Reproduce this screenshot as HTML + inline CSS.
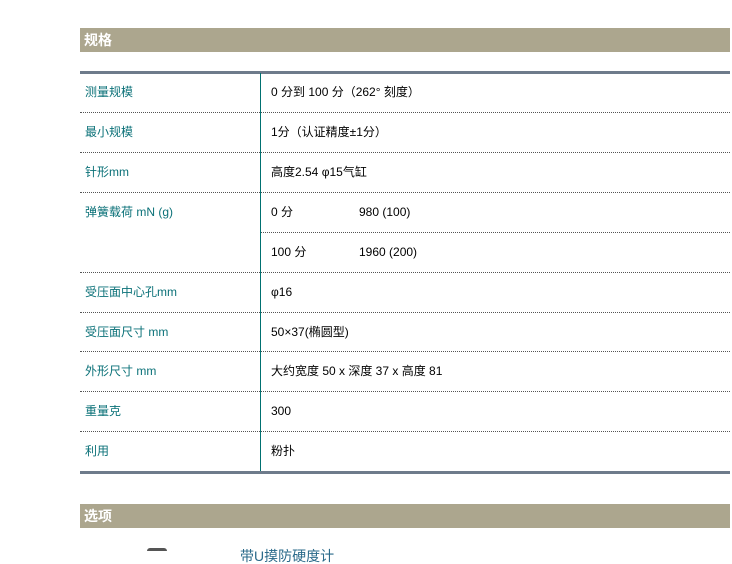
<!DOCTYPE html>
<html><head><meta charset="utf-8"><style>
body{margin:0;width:732px;height:550px;overflow:hidden;background:#fff;position:relative;font-family:"Liberation Sans","Noto Sans CJK SC","WenQuanYi Zen Hei",sans-serif;font-size:12px;}
.bar{position:absolute;left:80px;width:650px;height:24px;background:#aca68e;color:#fff;font-weight:bold;font-size:14px;line-height:24px;padding-left:4px;box-sizing:border-box;}
.thick{position:absolute;left:80px;width:650px;height:3px;background:#6e7b8b;}
.dot{position:absolute;height:0;border-top:1px dotted #555;}
.vl{position:absolute;left:260px;width:1px;background:#007070;}
.l{position:absolute;left:85px;color:#0b7178;line-height:14px;}
.v{position:absolute;color:#000;line-height:14px;}
</style></head><body>
<div class="bar" style="top:28px">规格</div>
<div class="thick" style="top:71px"></div>
<div class="vl" style="top:73px;height:398px"></div>
<div class="dot" style="left:80px;width:650px;top:112px"></div>
<div class="dot" style="left:80px;width:650px;top:152px"></div>
<div class="dot" style="left:80px;width:650px;top:192px"></div>
<div class="dot" style="left:261px;width:469px;top:232px"></div>
<div class="dot" style="left:80px;width:650px;top:272px"></div>
<div class="dot" style="left:80px;width:650px;top:312px"></div>
<div class="dot" style="left:80px;width:650px;top:351px"></div>
<div class="dot" style="left:80px;width:650px;top:391px"></div>
<div class="dot" style="left:80px;width:650px;top:431px"></div>
<div class="thick" style="top:471px"></div>

<div class="l" style="top:85px">测量规模</div><div class="v" style="left:271px;top:85px">0 分到 100 分（262° 刻度）</div>
<div class="l" style="top:125px">最小规模</div><div class="v" style="left:271px;top:125px">1分（认证精度±1分）</div>
<div class="l" style="top:165px">针形mm</div><div class="v" style="left:271px;top:165px">高度2.54 φ15气缸</div>
<div class="l" style="top:205px">弹簧载荷 mN (g)</div>
<div class="v" style="left:271px;top:205px">0 分</div><div class="v" style="left:359px;top:205px">980 (100)</div>
<div class="v" style="left:271px;top:245px">100 分</div><div class="v" style="left:359px;top:245px">1960 (200)</div>
<div class="l" style="top:285px">受压面中心孔mm</div><div class="v" style="left:271px;top:285px">φ16</div>
<div class="l" style="top:325px">受压面尺寸 mm</div><div class="v" style="left:271px;top:325px">50×37(椭圆型)</div>
<div class="l" style="top:364px">外形尺寸 mm</div><div class="v" style="left:271px;top:364px">大约宽度 50 x 深度 37 x 高度 81</div>
<div class="l" style="top:404px">重量克</div><div class="v" style="left:271px;top:404px">300</div>
<div class="l" style="top:444px">利用</div><div class="v" style="left:271px;top:444px">粉扑</div>

<div class="bar" style="top:504px">选项</div>
<div style="position:absolute;left:147px;top:548px;width:20px;height:3px;background:#555;border-radius:3px 3px 0 0"></div>
<div style="position:absolute;left:240px;top:548px;color:#2a6a8a;font-size:14px;line-height:16px">带U摸防硬度计</div>
</body></html>
